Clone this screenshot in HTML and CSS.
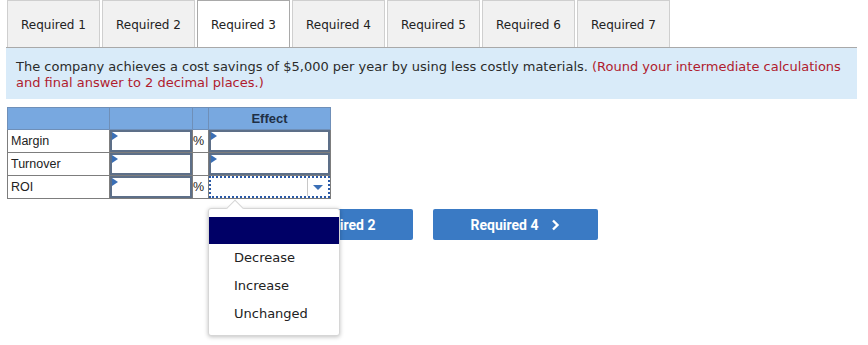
FILE: index.html
```html
<!DOCTYPE html>
<html lang="en">
<head>
  <meta charset="UTF-8">
  <title>Required 3</title>
  <link rel="stylesheet" href="styles.css">
</head>
<body>

  <div class="tabs">
    <div class="tab">Required 1</div>
    <div class="tab">Required 2</div>
    <div class="tab active">Required 3</div>
    <div class="tab">Required 4</div>
    <div class="tab">Required 5</div>
    <div class="tab">Required 6</div>
    <div class="tab">Required 7</div>
  </div>

  <div class="question">
    The company achieves a cost savings of $5,000 per year by using less costly materials.
    <span class="hint">(Round your intermediate calculations and final answer to 2 decimal places.)</span>
  </div>

  <div class="work">
    <table class="grid">
      <tr class="head">
        <th class="c-label"></th>
        <th class="c-num"></th>
        <th class="c-unit"></th>
        <th class="c-effect">Effect</th>
      </tr>
      <tr>
        <td>Margin</td>
        <td class="entry"><div class="box"><span class="flag"></span></div></td>
        <td class="unit">%</td>
        <td class="entry"><div class="box"><span class="flag"></span></div></td>
      </tr>
      <tr>
        <td>Turnover</td>
        <td class="entry"><div class="box"><span class="flag"></span></div></td>
        <td class="unit"></td>
        <td class="entry"><div class="box"><span class="flag"></span></div></td>
      </tr>
      <tr>
        <td>ROI</td>
        <td class="entry"><div class="box"><span class="flag"></span></div></td>
        <td class="unit">%</td>
        <td class="entry select"><div class="picker"><span class="arrow"></span></div></td>
      </tr>
    </table>

    <div class="nav">
      <button class="btn">
        <svg width="10" height="12" viewBox="0 0 10 12"><polyline points="7,1.5 2.5,6 7,10.5" fill="none" stroke="#fff" stroke-width="2.4"/></svg>
        Required 2
      </button>
      <button class="btn">
        Required 4
        <svg width="10" height="12" viewBox="0 0 10 12"><polyline points="3,1.5 7.5,6 3,10.5" fill="none" stroke="#fff" stroke-width="2.4"/></svg>
      </button>
    </div>

    <div class="menu">
      <div class="menu-top"></div>
      <div class="opt">Decrease</div>
      <div class="opt">Increase</div>
      <div class="opt">Unchanged</div>
    </div>
  </div>

</body>
</html>
```

FILE: styles.css
```css
body {
  margin: 0;
  min-height: 345px;
  font-family: "DejaVu Sans", Verdana, sans-serif;
  color: #222;
  background: #fff;
}

.tabs {
  display: flex;
  gap: 2px;
  padding-left: 7px;
}

.tab {
  width: 93px;
  height: 47px;
  box-sizing: border-box;
  display: flex;
  align-items: center;
  justify-content: center;
  padding-top: 1px;
  font-size: 12px;
  color: #222;
  background: #f1f1f1;
  border: 1px solid #cfcfcf;
  border-bottom: none;
}

.tab.active {
  background: #fff;
  border-color: #a9a9a9;
}

.question {
  margin: 0 11px 0 6px;
  padding: 11px 10px 8px 10px;
  background: #d9ebf9;
  border-top: 1px solid #a9a9a9;
  font-size: 13px;
  line-height: 16px;
  color: #2b2b2b;
}

.hint {
  color: #b01c2e;
}

.work {
  position: relative;
  padding-left: 7px;
  padding-top: 8px;
  padding-bottom: 110px;
}

.grid {
  border-collapse: collapse;
  font-family: "Liberation Sans", Arial, sans-serif;
  font-size: 12.5px;
  color: #222;
}

.grid th,
.grid td {
  border: 1px solid #7d7d7d;
  padding: 0;
}

.grid tr {
  height: 23px;
}

.grid .head {
  height: 22px;
  background: #78a8e0;
}

.grid th {
  font-weight: bold;
  font-size: 13px;
  color: #1f2f45;
  border-color: #6f8fb8;
}

.c-label { width: 101px; }
.c-num { width: 82px; }
.c-unit { width: 15px; }
.c-effect { width: 121px; }

.grid td:first-child {
  padding-left: 3px;
}

.unit {
  text-align: left;
  padding-left: 1px;
}

.entry {
  position: relative;
}

.box {
  position: relative;
  height: 18px;
  border: 2px solid #5d6f88;
  background: #fff;
}

.flag {
  position: absolute;
  left: 0;
  top: 0;
  width: 0;
  height: 0;
  border-top: 4px solid transparent;
  border-bottom: 4px solid transparent;
  border-left: 6px solid #3a6fb6;
}

.picker {
  position: relative;
  height: 18px;
  border: 2px dotted #2a5aa8;
  background: #fff;
}

.arrow {
  position: absolute;
  right: 0;
  top: 0;
  width: 20px;
  height: 18px;
  border-left: 1px solid #c8c8c8;
}

.arrow::after {
  content: "";
  position: absolute;
  left: 5px;
  top: 7px;
  border-left: 5px solid transparent;
  border-right: 5px solid transparent;
  border-top: 5px solid #3a6fb6;
}

.nav {
  display: flex;
  gap: 20px;
  margin-top: 10px;
  margin-left: 241px;
}

.btn {
  width: 165px;
  height: 31px;
  display: flex;
  align-items: center;
  justify-content: center;
  gap: 12px;
  border: none;
  border-radius: 2px;
  background: #3a7ac4;
  color: #fff;
  font-family: Roboto, "Liberation Sans", sans-serif;
  font-weight: bold;
  font-size: 14px;
}

.menu {
  position: absolute;
  left: 208px;
  top: 109px;
  width: 130px;
  height: 126px;
  background: #fff;
  border: 1px solid #d6d6d6;
  border-radius: 3px;
  box-shadow: 0 1px 4px rgba(0, 0, 0, 0.25);
  font-size: 13px;
  color: #222;
}

.menu::before {
  content: "";
  position: absolute;
  left: 20px;
  top: -7px;
  width: 11px;
  height: 11px;
  background: #fff;
  border-left: 1px solid #d6d6d6;
  border-top: 1px solid #d6d6d6;
  transform: rotate(45deg);
}

.menu-top {
  position: relative;
  margin-top: 8px;
  height: 27px;
  background: #000066;
}

.opt {
  height: 28px;
  line-height: 28px;
  padding-left: 25px;
}
```
